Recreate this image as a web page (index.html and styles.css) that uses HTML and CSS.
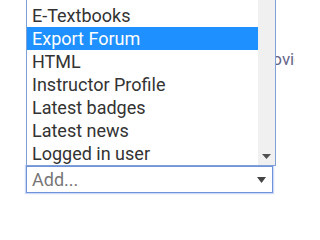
FILE: index.html
```html
<!DOCTYPE html>
<html>
<head>
<meta charset="utf-8">
<link rel="stylesheet" href="styles.css">
</head>
<body>
<div class="page">
  <div class="bg-line">Provide</div>
  <div class="select">
    <span class="placeholder">Add...</span>
    <svg class="caret" width="9" height="6" viewBox="0 0 9 6"><path d="M0 0H9L4.5 6Z" fill="#444"/></svg>
  </div>
  <div class="popup">
    <ul class="options">
      <li class="option">E-Textbooks</li>
      <li class="option selected">Export Forum</li>
      <li class="option">HTML</li>
      <li class="option">Instructor Profile</li>
      <li class="option">Latest badges</li>
      <li class="option">Latest news</li>
      <li class="option">Logged in user</li>
    </ul>
    <div class="scrollbar">
      <div class="scroll-btn">
        <svg width="9" height="5" viewBox="0 0 9 5"><path d="M0 0H9L4.5 5Z" fill="#505050"/></svg>
      </div>
    </div>
  </div>
</div>
</body>
</html>
```
FILE: styles.css
```css
html, body {
  margin: 0;
  background: #fff;
}
body {
  font-family: Roboto, "Noto Sans", sans-serif;
  font-size: 18px;
}
.page {
  position: relative;
  width: 295px;
  height: 205px;
  overflow: hidden;
}
.bg-line {
  margin: 48px 0 0 256px;
  font-size: 17px;
  line-height: 23px;
  color: #66668a;
  white-space: nowrap;
}
.select {
  box-sizing: border-box;
  margin: 95px 0 0 26px;
  width: 247px;
  height: 27px;
  border: 1px solid #6f94dc;
  box-shadow: 0 0 1px 1px rgba(110, 150, 225, 0.35);
  display: flex;
  align-items: center;
  justify-content: space-between;
  padding: 0 6px 0 5px;
  line-height: 25px;
  color: #777;
}
.caret {
  display: block;
  margin-top: 1px;
}
.popup {
  position: absolute;
  left: 26px;
  top: -1px;
  box-sizing: border-box;
  width: 250px;
  height: 167px;
  border: 1px solid #7f9fd9;
  background: #fff;
  display: flex;
}
.options {
  list-style: none;
  margin: 0;
  padding: 4px 0 0;
  flex: 1;
  min-width: 0;
}
.option {
  height: 23px;
  line-height: 23px;
  padding-left: 5px;
  color: #333;
  white-space: nowrap;
}
.option.selected {
  background: #1e90ff;
  color: #fff;
}
.scrollbar {
  width: 17px;
  background: #f0f0f0;
  display: flex;
  flex-direction: column;
  justify-content: flex-end;
}
.scroll-btn {
  height: 17px;
  display: flex;
  align-items: center;
  justify-content: center;
}
.scroll-btn svg {
  display: block;
}
```
